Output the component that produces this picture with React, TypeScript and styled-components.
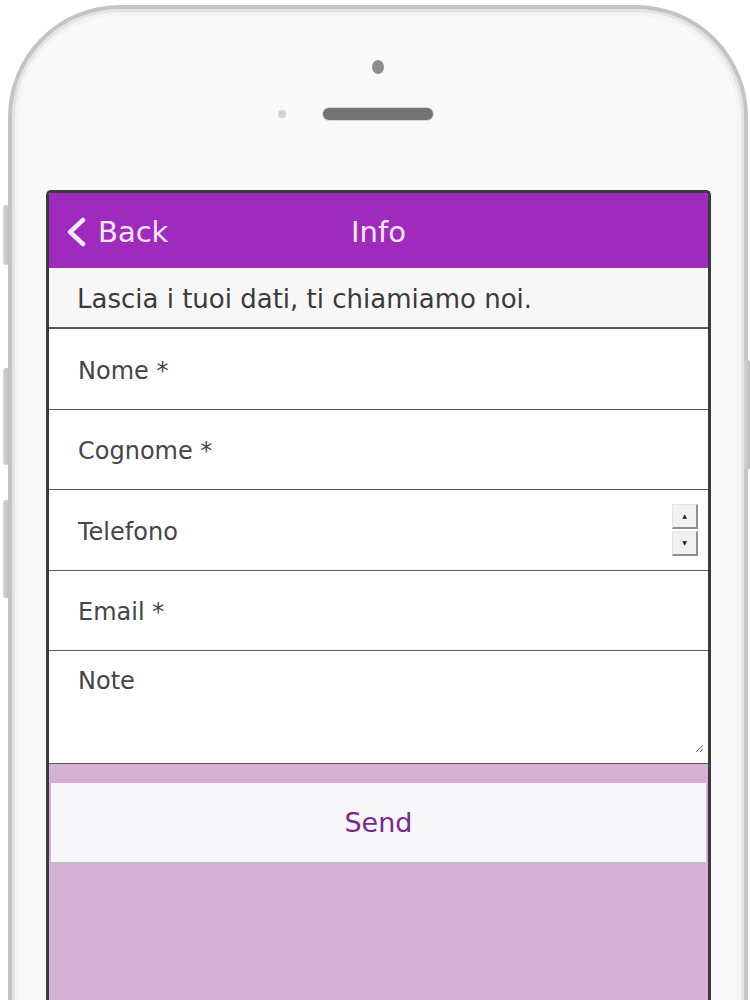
import React from "react";
import styled, { createGlobalStyle } from "styled-components";

const GlobalStyle = createGlobalStyle`
  html, body {
    margin: 0;
    padding: 0;
    background: #ffffff;
    overflow: hidden;
  }
  body {
    font-family: "DejaVu Sans", "Liberation Sans", sans-serif;
  }
`;

const Phone = styled.div`
  position: relative;
  box-sizing: border-box;
  width: 740px;
  height: 1100px;
  margin: 5px 0 0 8px;
  border: 4px solid #c4c4c6;
  border-radius: 112px 112px 0 0;
  background: #f9f9fa;
  box-shadow: inset 0 0 0 3px #e4e4e6, inset 0 0 0 7px #f4f4f5;
  display: flex;
  flex-direction: column;
`;

const SideButton = styled.div<{ $side: "left" | "right"; $top: number; $h: number }>`
  position: absolute;
  ${(p) => (p.$side === "left" ? "left: -9px;" : "right: -6px;")}
  top: ${(p) => p.$top}px;
  width: 6px;
  height: ${(p) => p.$h}px;
  border-radius: 3px;
  background: linear-gradient(90deg, #d6d6d8, #bdbdbf);
`;

const Bezel = styled.div`
  height: 181px;
  display: flex;
  flex-direction: column;
  align-items: center;
`;

const Camera = styled.div`
  margin-top: 51px;
  width: 12px;
  height: 14px;
  border-radius: 50%;
  background: #8c8c8e;
`;

const SpeakerRow = styled.div`
  margin-top: 34px;
  display: flex;
  align-items: center;
  gap: 37px;
`;

const Sensor = styled.div<{ $hidden?: boolean }>`
  width: 8px;
  height: 8px;
  border-radius: 50%;
  background: ${(p) => (p.$hidden ? "transparent" : "#d2d2d4")};
`;

const Speaker = styled.div`
  width: 110px;
  height: 12px;
  border-radius: 6px;
  background: #737375;
  box-shadow: 0 0 0 1px #d8d8da;
`;

const Screen = styled.div`
  flex: 1;
  margin: 0 33px 0 34px;
  border: 3px solid #3a3a3c;
  border-bottom: none;
  border-radius: 5px 5px 0 0;
  background: #d4b1d3;
  display: flex;
  flex-direction: column;
  overflow: hidden;
`;

const NavBar = styled.div`
  box-sizing: border-box;
  height: 75px;
  display: grid;
  grid-template-columns: 1fr auto 1fr;
  align-items: center;
  padding: 2px 16px 0;
  background: #9e2abe;
  color: #f7e8f7;
  font-size: 29px;
`;

const BackLink = styled.div`
  display: flex;
  align-items: center;
  gap: 11px;
`;

const Title = styled.div`
  text-align: center;
`;

const Intro = styled.div`
  box-sizing: border-box;
  height: 61px;
  display: flex;
  align-items: center;
  padding: 2px 0 0 28px;
  background: #f7f7f7;
  border-bottom: 2px solid #58585a;
  color: #3a3a3c;
  font-size: 26px;
`;

const Field = styled.label<{ $tall?: boolean }>`
  box-sizing: border-box;
  height: ${(p) => (p.$tall ? 113 : 80.5)}px;
  display: flex;
  align-items: ${(p) => (p.$tall ? "stretch" : "center")};
  padding: ${(p) => (p.$tall ? "0 4px 10px 29px" : "4px 10px 0 29px")};
  background: #ffffff;
  border-bottom: 1.5px solid #5a5a5c;
  position: relative;
`;

const Input = styled.input`
  flex: 1;
  border: none;
  outline: none;
  background: transparent;
  padding: 0;
  font-family: "DejaVu Sans", sans-serif;
  font-size: 24px;
  color: #3a3a3c;
  &::placeholder {
    color: #454547;
    opacity: 1;
  }
`;

const TextArea = styled.textarea`
  flex: 1;
  border: none;
  outline: none;
  background: transparent;
  padding: 16px 0 0;
  font-family: "DejaVu Sans", sans-serif;
  font-size: 24px;
  color: #3a3a3c;
  resize: vertical;
  &::placeholder {
    color: #454547;
    opacity: 1;
  }
`;

const Spinner = styled.div`
  display: flex;
  flex-direction: column;
  gap: 2px;
  width: 26px;
  margin-top: -4px;
`;

const SpinButton = styled.div`
  height: 22px;
  background: #f1f1f1;
  border-right: 2px solid #8f8f8f;
  border-bottom: 2px solid #8f8f8f;
  border-top: 1px solid #e4e4e4;
  border-left: 1px solid #e4e4e4;
  display: flex;
  align-items: center;
  justify-content: center;
  font-size: 6px;
  color: #222;
`;

const SendArea = styled.div`
  padding: 19px 2px 0;
`;

const SendButton = styled.button`
  width: 100%;
  height: 80px;
  border: none;
  border-bottom: 1px solid #c4bcc4;
  background: #f7f7f9;
  color: #7a2888;
  font-family: "DejaVu Sans", sans-serif;
  font-size: 27px;
  cursor: pointer;
`;

const Chevron = () => (
  <svg width="22" height="30" viewBox="0 0 22 30">
    <polyline
      points="18,3 5,15 18,27"
      fill="none"
      stroke="#f7e8f7"
      strokeWidth="4.5"
      strokeLinecap="round"
      strokeLinejoin="round"
    />
  </svg>
);

export default function App() {
  return (
    <>
      <GlobalStyle />
      <Phone>
        <SideButton $side="left" $top={196} $h={60} />
        <SideButton $side="left" $top={359} $h={97} />
        <SideButton $side="left" $top={491} $h={98} />
        <SideButton $side="right" $top={351} $h={110} />
        <Bezel>
          <Camera />
          <SpeakerRow>
            <Sensor />
            <Speaker />
            <Sensor $hidden />
          </SpeakerRow>
        </Bezel>
        <Screen>
          <NavBar>
            <BackLink>
              <Chevron />
              Back
            </BackLink>
            <Title>Info</Title>
            <div />
          </NavBar>
          <Intro>Lascia i tuoi dati, ti chiamiamo noi.</Intro>
          <Field>
            <Input placeholder="Nome *" />
          </Field>
          <Field>
            <Input placeholder="Cognome *" />
          </Field>
          <Field>
            <Input placeholder="Telefono" />
            <Spinner>
              <SpinButton>▲</SpinButton>
              <SpinButton>▼</SpinButton>
            </Spinner>
          </Field>
          <Field>
            <Input placeholder="Email *" />
          </Field>
          <Field $tall>
            <TextArea placeholder="Note" />
          </Field>
          <SendArea>
            <SendButton>Send</SendButton>
          </SendArea>
        </Screen>
      </Phone>
    </>
  );
}
